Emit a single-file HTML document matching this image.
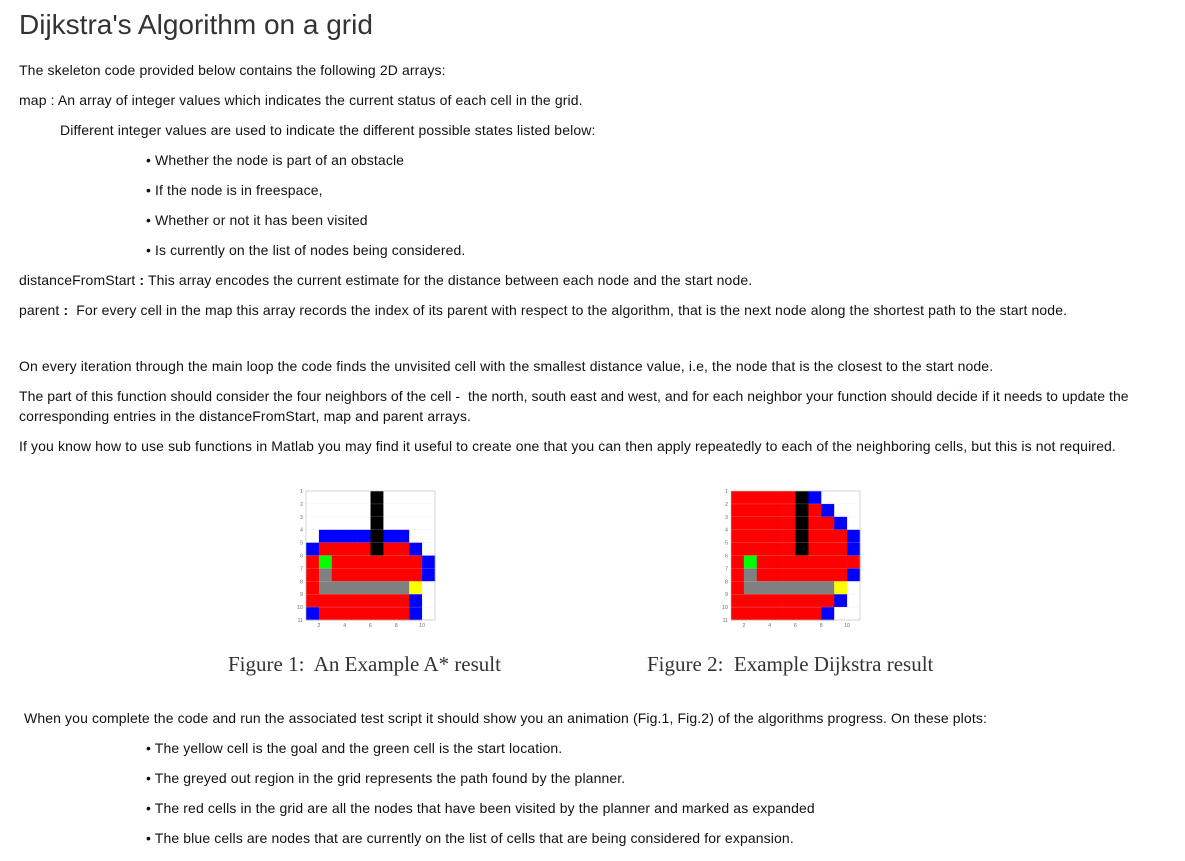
<!DOCTYPE html>
<html><head><meta charset="utf-8"><style>
body{margin:0;background:#fff;width:1185px;height:861px;position:relative;overflow:hidden;font-family:"Liberation Sans",Arial,sans-serif;font-size:14px;letter-spacing:0.12px;color:#111}
.l{position:absolute;white-space:nowrap;line-height:16px}
h1{position:absolute;left:19px;top:8px;margin:0;font-weight:normal;font-size:28px;letter-spacing:0;color:#333;line-height:34px}
.cap{position:absolute;font-family:"Liberation Serif",serif;font-size:21px;letter-spacing:0;color:#333;white-space:nowrap}
svg{position:absolute}
</style></head><body>
<h1>Dijkstra's Algorithm on a grid</h1>
<div class="l" style="left:19px;top:62px">The skeleton code provided below contains the following 2D arrays:</div>
<div class="l" style="left:19px;top:92px">map : An array of integer values which indicates the current status of each cell in the grid.</div>
<div class="l" style="left:60px;top:122px">Different integer values are used to indicate the different possible states listed below:</div>
<div class="l" style="left:146px;top:152px">• Whether the node is part of an obstacle</div>
<div class="l" style="left:146px;top:182px">• If the node is in freespace,</div>
<div class="l" style="left:146px;top:212px">• Whether or not it has been visited</div>
<div class="l" style="left:146px;top:242px">• Is currently on the list of nodes being considered.</div>
<div class="l" style="left:19px;top:272px">distanceFromStart <b>:</b> This array encodes the current estimate for the distance between each node and the start node.</div>
<div class="l" style="left:19px;top:302px">parent <b>:</b>&nbsp; For every cell in the map this array records the index of its parent with respect to the algorithm, that is the next node along the shortest path to the start node.</div>
<div class="l" style="left:19px;top:358px">On every iteration through the main loop the code finds the unvisited cell with the smallest distance value, i.e, the node that is the closest to the start node.</div>
<div class="l" style="left:19px;top:388px;letter-spacing:0.05px">The part of this function should consider the four neighbors of the cell -&nbsp; the north, south east and west, and for each neighbor your function should decide if it needs to update the</div>
<div class="l" style="left:19px;top:408px">corresponding entries in the distanceFromStart, map and parent arrays.</div>
<div class="l" style="left:19px;top:438px">If you know how to use sub functions in Matlab you may find it useful to create one that you can then apply repeatedly to each of the neighboring cells, but this is not required.</div>
<svg id="f1" style="left:290px;top:487px" width="150" height="145"></svg>
<svg id="f2" style="left:715px;top:487px" width="150" height="145"></svg>
<div class="cap" style="left:228px;top:652px">Figure 1:&nbsp; An Example A* result</div>
<div class="cap" style="left:647px;top:652px">Figure 2:&nbsp; Example Dijkstra result</div>
<div class="l" style="left:24px;top:710px">When you complete the code and run the associated test script it should show you an animation (Fig.1, Fig.2) of the algorithms progress. On these plots:</div>
<div class="l" style="left:146px;top:740px">• The yellow cell is the goal and the green cell is the start location.</div>
<div class="l" style="left:146px;top:770px">• The greyed out region in the grid represents the path found by the planner.</div>
<div class="l" style="left:146px;top:800px">• The red cells in the grid are all the nodes that have been visited by the planner and marked as expanded</div>
<div class="l" style="left:146px;top:830px">• The blue cells are nodes that are currently on the list of cells that are being considered for expansion.</div>
<script>
var C={w:'#fff',b:'#0000ff',r:'#ff0000',k:'#000',g:'#00ff00',y:'#ffff00',a:'#808080'};
var g1=["wwwwwkwwww","wwwwwkwwww","wwwwwkwwww","wbbbbkbbww","brrrrkrrbw","rgrrrrrrrb","rarrrrrrrb","raaaaaaayw","rrrrrrrrbw","brrrrrrrbw"];
var g2=["rrrrrkbwww","rrrrrkrbww","rrrrrkrrbw","rrrrrkrrrb","rrrrrkrrrb","rgrrrrrrrr","rarrrrrrrb","raaaaaaayw","rrrrrrrrbw","rrrrrrrbww"];
function draw(id,g){var s=document.getElementById(id),h='',ox=16,oy=4,c=12.9;
for(var r=0;r<10;r++)for(var q=0;q<10;q++)h+='<rect x="'+(ox+q*c)+'" y="'+(oy+r*c)+'" width="'+(c+0.3)+'" height="'+(c+0.3)+'" fill="'+C[g[r][q]]+'"/>';
for(var i=0;i<=10;i++){h+='<line x1="'+ox+'" x2="'+(ox+10*c)+'" y1="'+(oy+i*c)+'" y2="'+(oy+i*c)+'" stroke="#ddd" stroke-width="0.4" opacity="0.5"/>';}
h+='<rect x="'+ox+'" y="'+oy+'" width="'+10*c+'" height="'+10*c+'" fill="none" stroke="#bbb" stroke-width="0.6"/>';
for(var i=1;i<=11;i++)h+='<text x="'+(ox-3)+'" y="'+(oy+(i-1)*c+2)+'" font-size="5" text-anchor="end" fill="#666" font-family="Liberation Sans">'+i+'</text>';
for(var i=2;i<=10;i+=2)h+='<text x="'+(ox+(i-1)*c)+'" y="'+(oy+10*c+7)+'" font-size="5" text-anchor="middle" fill="#666" font-family="Liberation Sans">'+i+'</text>';
s.innerHTML=h;}
draw('f1',g1);draw('f2',g2);
</script>
</body></html>
